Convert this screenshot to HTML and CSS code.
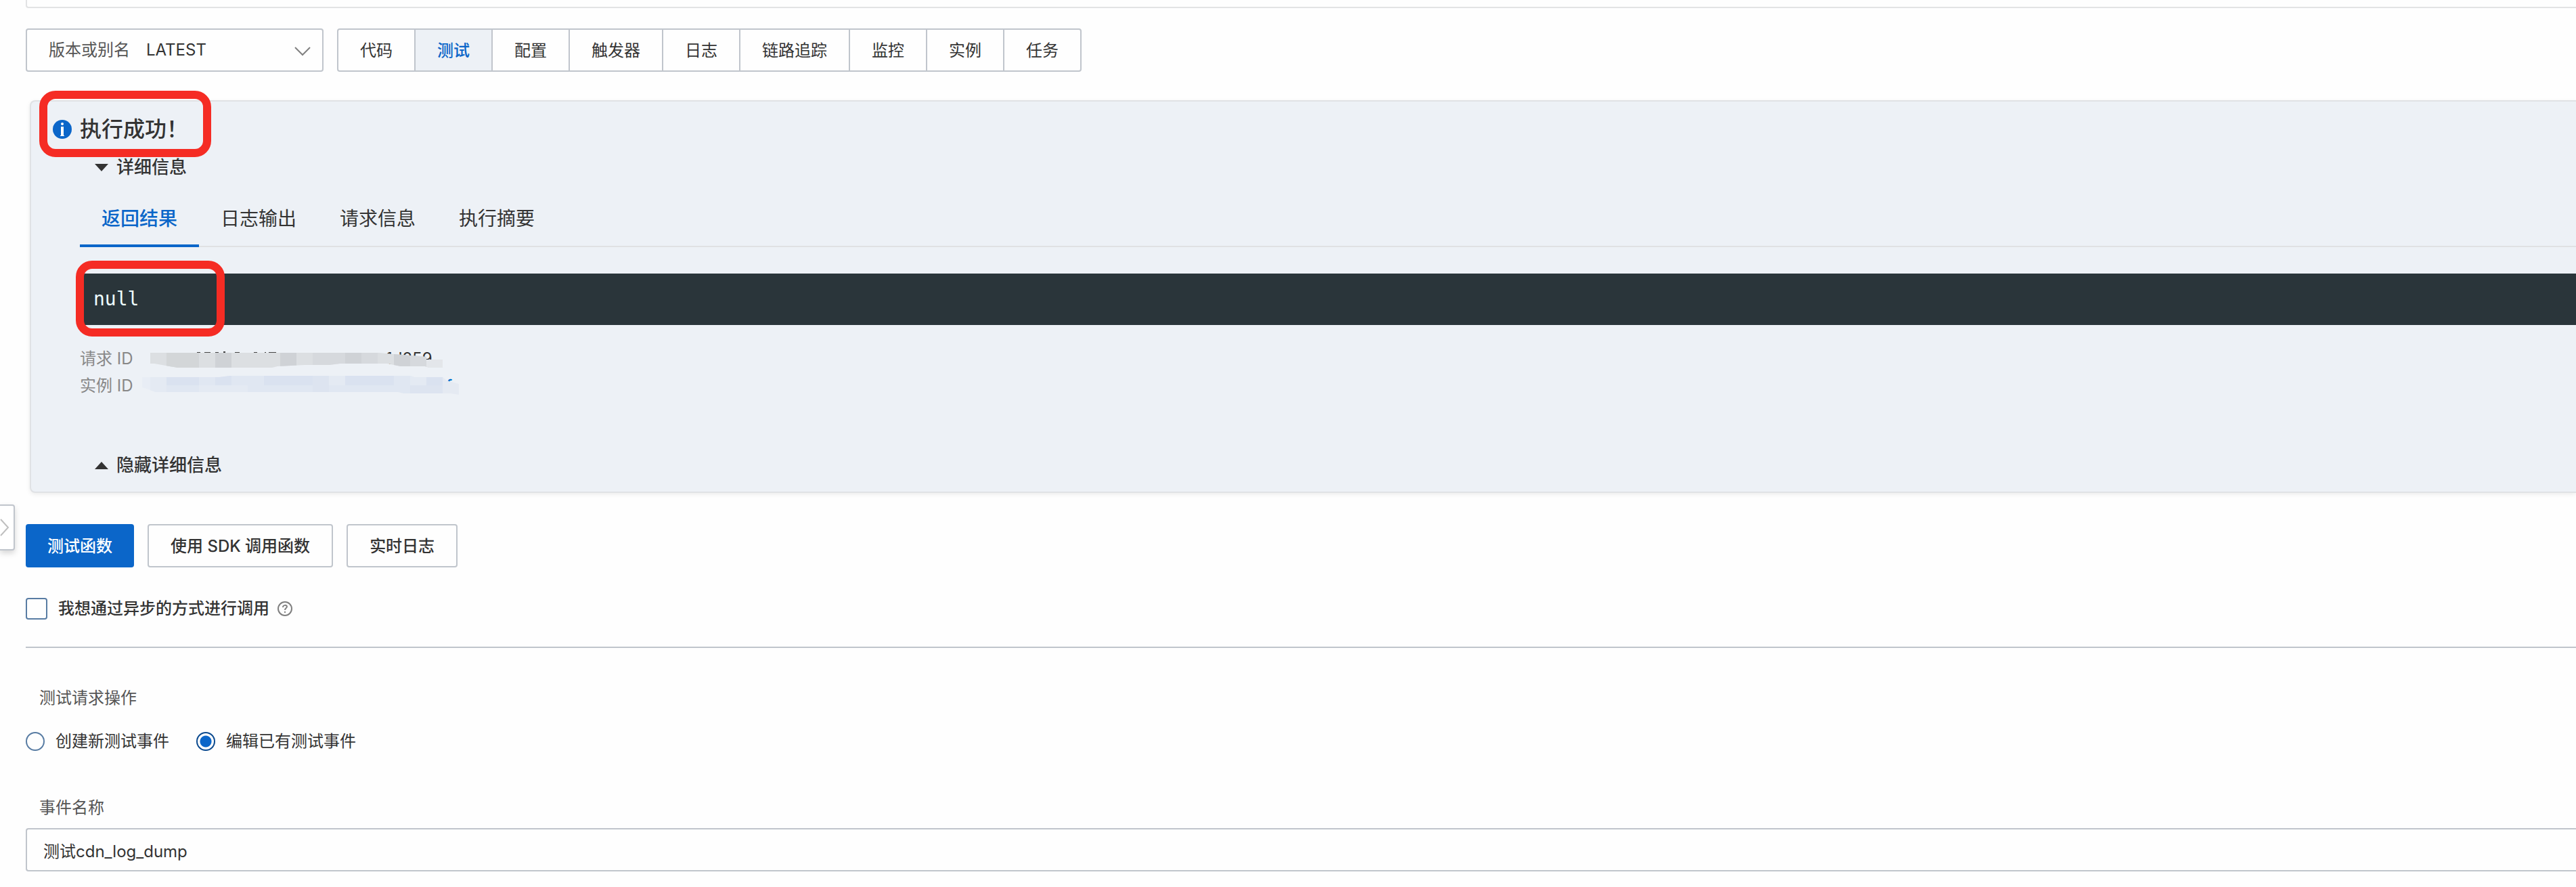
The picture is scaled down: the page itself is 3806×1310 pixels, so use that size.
FILE: index.html
```html
<!DOCTYPE html>
<html lang="zh-CN">
<head>
    <meta charset="UTF-8">
    <title>函数计算-测试函数</title>
    <link rel="stylesheet" href="styles.css">
</head>
<body>
<div class="top-box"></div>

<div class="toolbar">
    <div class="version">
        <label for="version">版本或别名</label>
        <select id="version">
            <option>LATEST</option>
        </select>
        <svg class="arrow" width="26" height="16" viewBox="0 0 26 16"><path d="M2 2L13 13L24 2" fill="none" stroke="#808080" stroke-width="2"/></svg>
    </div>
    <nav class="nav">
        <a href="#">代码</a>
        <a href="#" class="active">测试</a>
        <a href="#">配置</a>
        <a href="#">触发器</a>
        <a href="#">日志</a>
        <a href="#">链路追踪</a>
        <a href="#">监控</a>
        <a href="#">实例</a>
        <a href="#">任务</a>
    </nav>
</div>

<!--执行结果-->
<div class="result">
    <span class="mark mark-title"></span>
    <h2 class="title">
        <svg width="28" height="28" viewBox="0 0 28 28"><circle cx="14" cy="14" r="14" fill="#0b66c9"/><circle cx="14" cy="6" r="2" fill="#fff"/><path d="M12 10h4v13h1v1h-6v-1h1z" fill="#fff"/></svg>
        <span>执行成功！</span>
    </h2>
    <div class="detail">
        <button type="button" class="toggle"><i class="caret"></i>详细信息</button>
        <div class="tabs">
            <button type="button" class="active">返回结果</button>
            <button type="button">日志输出</button>
            <button type="button">请求信息</button>
            <button type="button">执行摘要</button>
        </div>
        <div class="code">
            <pre>null</pre>
            <span class="mark mark-code"></span>
        </div>
        <div class="ids">
            <p><span>请求 ID</span><b>1d259</b></p>
            <p><span>实例 ID</span><a href="#">f</a></p>
            <!--打码-->
            <svg class="mosaic" width="480" height="90" viewBox="0 0 480 90">
                <defs>
                    <clipPath id="gray"><path d="M12 17H350L372 19L420 23V27H444V39H424L418 37H382L362 33H292L276 35H240L200 37L192 39H52L18 33H12Z"/></clipPath>
                    <clipPath id="blue"><path d="M0 53H114L130 51H396L402 53H444L450 58L468 63V79L456 77H386L378 75H20L12 72L0 68Z"/></clipPath>
                </defs>
                <g fill="#444">
                    <path d="M81 16h5v1h-5zM92 16h9v1h-9zM108 16h5v1h-5zM120 15h3v2h-3zM137 16h7v1h-7zM165 16h5v1h-5zM181 16h2v1h-2zM187 16h11v1h-11z"/>
                </g>
                <g clip-path="url(#gray)">
                    <path fill="#dcdfe2" d="M12 15h432v26H12z"/>
                    <path fill="#d3d6d8" d="M36 15h48v26H36z"/>
                    <path fill="#cfd2d6" d="M108 15h24v26h-24zM204 15h24v26h-24zM300 15h24v26h-24zM372 15h24v26h-24z"/>
                    <path fill="#d6d9dd" d="M252 15h48v26h-48zM324 15h24v26h-24zM396 15h24v26h-24z"/>
                    <path fill="#e3e6ea" d="M420 15h24v26h-24z"/>
                </g>
                <g clip-path="url(#blue)">
                    <path fill="#e0e7f2" d="M12 50h432v30H12z"/>
                    <path fill="#e8edf5" d="M0 50h12v30H0z"/>
                    <path fill="#e4eaf3" d="M12 50h24v30H12zM84 65h72v15H84zM276 50h24v15h-24zM396 50h24v15h-24z"/>
                    <path fill="#dae2f0" d="M36 50h48v15H36zM108 50h24v15h-24zM180 50h72v15h-72zM300 50h72v15h-72zM420 50h24v15h-24z"/>
                    <path fill="#dde4f0" d="M252 50h24v30h-24zM396 65h48v15h-48z"/>
                    <path fill="#e5eaf2" d="M444 50h24v30h-24z"/>
                </g>
            </svg>
        </div>
        <button type="button" class="toggle"><i class="caret up"></i>隐藏详细信息</button>
    </div>
</div>

<button type="button" class="side" aria-label="展开">
    <svg width="14" height="26" viewBox="0 0 14 26"><path d="M1 1L12 13L1 25" fill="none" stroke="#bfbfbf" stroke-width="2"/></svg>
</button>

<div class="btns">
    <button type="button" class="primary">测试函数</button>
    <button type="button">使用 SDK 调用函数</button>
    <button type="button">实时日志</button>
</div>

<div class="async">
    <input type="checkbox" id="async">
    <label for="async">我想通过异步的方式进行调用</label>
    <svg width="22" height="22" viewBox="0 0 22 22" fill="none" stroke="#808080" stroke-width="2"><circle cx="11" cy="11" r="10"/><path d="M8 9c0-4 6-4 6-1c0 2-3 2-3 5M11 15v2"/></svg>
</div>

<form class="event">
    <h3>测试请求操作</h3>
    <div class="radios">
        <label><input type="radio" name="op">创建新测试事件</label>
        <label><input type="radio" name="op" checked>编辑已有测试事件</label>
    </div>
    <label class="name" for="name">事件名称</label>
    <input type="text" id="name" value="测试cdn_log_dump">
</form>
</body>
</html>
```
FILE: styles.css
```css
* {
    margin: 0;
    padding: 0;
    box-sizing: border-box;
}

body {
    position: relative;
    padding-left: 38px;
    padding-bottom: 22px;
    font: 24px/40px Inter, "Noto Sans CJK SC", sans-serif;
    color: #333;
    background: #fefefe;
}

button, input, select {
    font: inherit;
    color: inherit;
    background: none;
    border: none;
    outline: none;
    appearance: none;
}

a {
    color: inherit;
    text-decoration: none;
}

svg {
    display: block;
    flex: none;
}

.top-box {
    height: 12px;
    border-left: 2px solid #e2e3e4;
    border-bottom: 2px solid #e2e3e4;
    border-bottom-left-radius: 4px;
}

/*顶部工具栏*/
.toolbar {
    display: flex;
    gap: 20px;
    margin-top: 30px;
}

.version {
    position: relative;
    display: flex;
    align-items: center;
    width: 440px;
    height: 64px;
    padding-left: 32px;
    border: 2px solid #c0c5cc;
    border-radius: 4px;
}

.version label {
    color: #555;
}

.version select {
    flex: 1;
    height: 60px;
    padding-left: 24px;
}

.version .arrow {
    position: absolute;
    top: 24px;
    right: 16px;
    pointer-events: none;
}

.nav {
    display: flex;
    height: 64px;
    border: 2px solid #c0c5cc;
    border-radius: 4px;
}

.nav a {
    padding: 0 32px;
    line-height: 62px;
    border-right: 2px solid #c0c5cc;
}

.nav a:last-child {
    border-right: none;
}

.nav .active {
    height: 60px;
    font-weight: 500;
    color: #0b66c9;
    background: #edf1f6;
}

/*执行结果*/
.result {
    position: relative;
    margin: 42px 0 0 6px;
    padding: 17px 0 19px 32px;
    border: 2px solid #e0e2e5;
    border-right: none;
    border-radius: 8px 0 0 8px;
    background: #edf1f6;
    box-shadow: 0 2px 6px rgba(0, 0, 0, .08);
}

.title {
    display: flex;
    align-items: center;
    gap: 12px;
    font-size: 32px;
    line-height: 48px;
    font-weight: 500;
}

.mark {
    position: absolute;
    border: 12px solid #f52c24;
    border-radius: 24px;
}

.mark-title {
    top: -16px;
    left: 12px;
    width: 254px;
    height: 98px;
}

.mark-code {
    top: -19px;
    left: -6px;
    width: 220px;
    height: 112px;
}

.detail {
    padding: 12px 0 0 40px;
}

.toggle {
    display: flex;
    align-items: center;
    gap: 12px;
    margin-left: 22px;
    font-size: 26px;
    font-weight: 500;
}

.caret {
    border: 10px solid transparent;
    border-top: 11px solid #333;
    border-bottom: none;
}

.caret.up {
    border-top: none;
    border-bottom: 11px solid #333;
}

.tabs {
    display: flex;
    margin-top: 14px;
    font-size: 28px;
    box-shadow: inset 0 -2px #e0e1e3;
}

.tabs button {
    height: 84px;
    padding: 0 32px;
}

.tabs .active {
    font-weight: 500;
    color: #0b66c9;
    box-shadow: inset 0 -4px #0b66c9;
}

.code {
    position: relative;
    margin-top: 39px;
    padding: 18px 20px;
    color: #eff;
    background: #2a353a;
}

.code pre {
    font: 28px/40px "DejaVu Sans Mono", monospace;
}

.ids {
    position: relative;
    margin: 30px 0 77px;
}

.ids p {
    display: flex;
}

.ids span {
    width: 452px;
    color: #888;
}

.ids b {
    font-weight: 400;
}

.ids a {
    margin-left: 89px;
    font-weight: 500;
    color: #0070cc;
}

.mosaic {
    position: absolute;
    top: -6px;
    left: 92px;
}

/*左侧展开*/
.side {
    position: absolute;
    top: 745px;
    left: 0;
    width: 22px;
    height: 68px;
    border: 2px solid #c0c5cc;
    border-left: none;
    border-radius: 0 4px 4px 0;
    background: #fff;
    box-shadow: 0 4px 8px rgba(0, 0, 0, .16);
}

/*按钮*/
.btns {
    display: flex;
    gap: 20px;
    margin-top: 46px;
}

.btns button {
    height: 64px;
    padding: 2px 32px 0;
    font-weight: 500;
    border: 2px solid #c0c5cc;
    border-radius: 4px;
}

.btns .primary {
    border: none;
    color: #fff;
    background: #0b66c9;
}

.async {
    display: flex;
    align-items: center;
    height: 32px;
    margin-top: 45px;
    font-weight: 500;
}

.async input {
    width: 32px;
    height: 32px;
    border: 2px solid #587ca3;
    border-radius: 4px;
}

.async label {
    margin: 0 12px 0 16px;
}

/*测试事件*/
.event {
    margin-top: 40px;
    padding-top: 54px;
    border-top: 2px solid #c0c5cc;
}

.event h3, .event .name {
    display: block;
    padding-left: 20px;
    font-size: 24px;
    font-weight: 400;
    color: #555;
}

.radios {
    display: flex;
    gap: 40px;
    margin: 24px 0 58px;
}

.radios label {
    display: flex;
    align-items: center;
    gap: 16px;
}

.radios input {
    width: 28px;
    height: 28px;
    border: 2px solid #587ca3;
    border-radius: 50%;
}

.radios input:checked {
    border-color: #0b4a8f;
    background: radial-gradient(circle, #0b66c9 8px, transparent 9px);
}

.event input[type=text] {
    display: block;
    width: 100%;
    height: 64px;
    margin-top: 10px;
    padding-left: 24px;
    border: 2px solid #c0c5cc;
    border-right: none;
    border-radius: 4px 0 0 4px;
}
```
